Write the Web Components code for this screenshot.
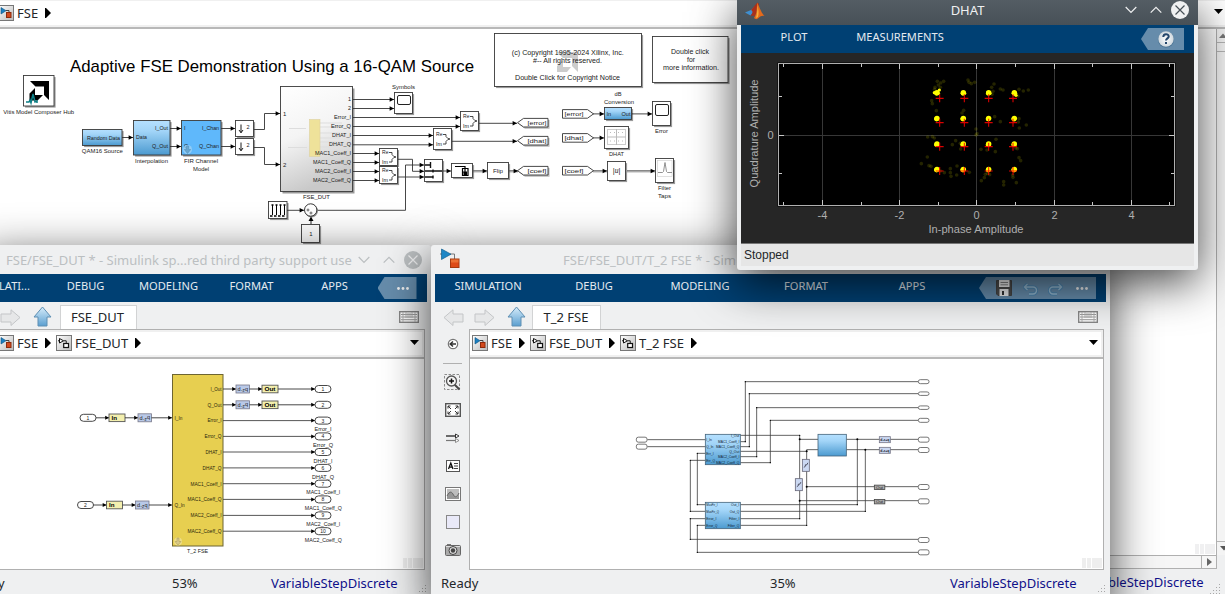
<!DOCTYPE html>
<html lang="en">
<head>
<meta charset="utf-8">
<title>Simulink desktop</title>
<style>
html,body{margin:0;height:100%;overflow:hidden;background:#eff0f1}
body{font-family:"Noto Sans",sans-serif;font-size:12.5px;color:#232629}
</style>
</head>
<body>
<desk-top></desk-top>
<script>
/* ---------- shared helpers ---------- */
function define(name, render) {
  customElements.define(name, class extends HTMLElement {
    connectedCallback() {
      if (this.shadowRoot) return;
      this.attachShadow({mode: 'open'}).innerHTML = render(this);
    }
  });
}

/* Diagram primitives, all in desktop coordinates. */
const F = 'font-family="Liberation Sans, Arial, sans-serif"';
const text = (x, y, s, size, anchor = 'start', len = 0, fill = '#222', extra = '') =>
  `<text x="${x}" y="${y}" font-size="${size}" text-anchor="${anchor}" fill="${fill}" ${len ? `textLength="${len}" lengthAdjust="spacingAndGlyphs"` : ''} ${extra}>${s}</text>`;
const block = (x, y, x2, y2, fill = '#fff', shadow = 1.6) =>
  (shadow ? `<rect x="${x + shadow}" y="${y + shadow}" width="${x2 - x}" height="${y2 - y}" fill="#000" opacity=".4"/>` : '') +
  `<rect x="${x}" y="${y}" width="${x2 - x}" height="${y2 - y}" fill="${fill}" stroke="#3a3a3a" stroke-width=".9"/>`;
const arrowHead = (x, y, s = 2.3) => `<path d="M${x} ${y}l${-s * 1.9} ${-s}v${2 * s}z" fill="#000"/>`;
const wire = (pts, head = true, c = '#333', w = .9, s = 2.3) => {
  const last = pts[pts.length - 1];
  return `<polyline points="${pts.map(p => p.join()).join(' ')}" fill="none" stroke="${c}" stroke-width="${w}"/>` + (head ? arrowHead(last[0], last[1], s) : '');
};
const oval = (x, y, w = 16, h = 7) => `<rect x="${x}" y="${y - h / 2}" width="${w}" height="${h}" rx="${h / 2}" fill="#fff" stroke="#333" stroke-width=".9"/>`;
const blueGrad = `<linearGradient id="bl" x1="0" y1="0" x2="0" y2="1"><stop offset="0" stop-color="#b5e0ff"/><stop offset=".3" stop-color="#a3d5f8"/><stop offset="1" stop-color="#4b9ad0"/></linearGradient>`;

/* ---------- icons ---------- */
const ICONS = {
  model: `<svg width="16" height="16"><defs><linearGradient id="g" x1="0" y1="0" x2="1" y2="1"><stop offset="0" stop-color="#fff"/><stop offset="1" stop-color="#bbb"/></linearGradient></defs><rect x=".5" y=".5" width="15" height="15" fill="url(#g)" stroke="#777"/><path d="M3 2.500v6.500L8 5.700z" fill="#1b7fc0" stroke="#0c517f" stroke-width=".6"/><path d="M8 5.500h3v2" fill="none" stroke="#444"/><rect x="8.500" y="7.500" width="4.500" height="5" fill="#d4491c" stroke="#8e2a0b"/></svg>`,
  subsys: `<svg width="16" height="16"><defs><linearGradient id="g" x1="0" y1="0" x2="1" y2="1"><stop offset="0" stop-color="#fff"/><stop offset="1" stop-color="#bbb"/></linearGradient></defs><rect x=".5" y=".5" width="15" height="15" fill="url(#g)" stroke="#777"/><path d="M3.500 3.500v4.500L7.500 5.800zM7.500 5.800h2.700v2.500M2 5.800h1.500" fill="#fff" stroke="#111"/><rect x="7.700" y="8.500" width="4.800" height="4" fill="#fff" stroke="#111" stroke-width="1.200"/></svg>`,
  app: `<svg width="22" height="22"><path d="M1 6h3M11 6h4.500v6" fill="none" stroke="#777"/><path d="M2.500 1v10.500L12 6.200z" fill="#1d86c6" stroke="#11608f" stroke-width=".7"/><rect x="11.500" y="11" width="8.500" height="8.500" fill="#dd4b18" stroke="#a53a10"/><path d="M12 11.500h7.500v3H12z" fill="#f08040" opacity=".7"/></svg>`,
  left: `<svg width="21" height="17"><path d="M1 8.500 10 .8V5h10v8H10v3.500z" fill="#e6e7e8" stroke="#c3c5c7"/></svg>`,
  right: `<svg width="21" height="17"><path d="M20 8.500 11 .8V5H1v8h10v3.500z" fill="#e6e7e8" stroke="#c3c5c7"/></svg>`,
  up: `<svg width="19" height="21"><defs><linearGradient id="u" x1="0" y1="0" x2="0" y2="1"><stop offset="0" stop-color="#d6ecfa"/><stop offset="1" stop-color="#5b9fd0"/></linearGradient></defs><path d="M9.500 1 18 11h-4v9H5v-9H1z" fill="url(#u)" stroke="#5e8fb3"/></svg>`,
  keyboard: `<svg width="20" height="12"><rect x=".7" y=".7" width="18.600" height="10.600" fill="#fff" stroke="#858585" stroke-width="1.400"/><path d="M2 3.500h16M2 6h16M2 8.700h16" stroke="#999"/><path d="M4 1v10M7 1v6M9 2v5M11 2v5M13 1v6M16 1v10" stroke="#aaa" stroke-width=".9"/></svg>`,
  caret: `<svg width="9" height="5"><path d="M0 0h9L4.500 5z" fill="#000"/></svg>`,
  tri: `<svg width="6" height="10"><path d="M0 0h1l5 5-5 5H0z" fill="#000"/></svg>`,
  back: `<svg width="12" height="12"><circle cx="6" cy="6" r="4.700" fill="#fff" stroke="#777" stroke-width="1.200"/><path d="M9 6H3.500M6 3.500 3.200 6 6 8.500" fill="none" stroke="#333" stroke-width="1.500"/></svg>`,
  zoom: `<svg width="17" height="17"><rect x=".5" y=".5" width="15" height="15" fill="none" stroke="#8b8b8b" stroke-dasharray="2.500 1.500"/><path d="m10.500 10.500 5 5" stroke="#444" stroke-width="2"/><circle cx="7.500" cy="7" r="5" fill="#f5f5f5" stroke="#555" stroke-width="1.300"/><path d="M7.500 4.500v5M5 7h5" stroke="#111" stroke-width="1.500"/></svg>`,
  fit: `<svg width="16" height="14"><rect x=".7" y=".7" width="14.600" height="12.600" fill="#fff" stroke="#555" stroke-width="1.400"/><path d="M3 5.500V3h2.500M3 3l3 3M13 5.500V3h-2.500M13 3l-3 3M3 8.500V11h2.500M3 11l3-3M13 8.500V11h-2.500M13 11l-3-3" fill="none" stroke="#333" stroke-width="1"/></svg>`,
  arrows: `<svg width="15" height="10"><path d="M1 3h11" stroke="#111" stroke-width="1.200"/><path d="M1 7.500h11" stroke="#777" stroke-width="1.200"/><path d="M10.500 1v4l3.500-2z" fill="#fff" stroke="#111" stroke-width=".8"/><path d="M10.500 5.500v4l3.500-2z" fill="#fff" stroke="#777" stroke-width=".8"/></svg>`,
  note: `<svg width="14" height="12"><rect x=".5" y=".5" width="13" height="11" fill="#fff" stroke="#555"/><path d="M2.500 9 4.800 3 7 9M3.300 7.200h3" fill="none" stroke="#111" stroke-width="1.300"/><path d="M8 3.500h4M8 6h4M8 8.500h4" stroke="#444"/></svg>`,
  image: `<svg width="16" height="14"><rect x=".5" y=".5" width="15" height="13" fill="#fff" stroke="#777"/><rect x="2" y="2" width="12" height="10" fill="#bdbdbd"/><path d="M2 9c3-6 5-4 6.500-1S12 10 14 6v6H2z" fill="#969696"/><path d="M2 9c3-6 5-4 6.500-1S12 10 14 6" fill="none" stroke="#666"/></svg>`,
  area: `<svg width="14" height="14"><rect x=".5" y=".5" width="13" height="13" fill="#e9e9f8" stroke="#888"/></svg>`,
  camera: `<svg width="16" height="12"><rect x="2" y="0" width="4" height="2" fill="#777"/><rect x=".5" y="1.500" width="15" height="10" rx="1" fill="#aaa" stroke="#666"/><path d="M1 2.500h14" stroke="#ddd"/><circle cx="8" cy="6.500" r="4" fill="#ddd" stroke="#444"/><circle cx="8" cy="6.500" r="2.200" fill="#444"/></svg>`,
  save: `<svg width="16" height="16"><path d="M.5.5h15v15H2l-1.500-1.500z" fill="#4c4c4c" stroke="#444"/><rect x="3" y="0" width="10.500" height="7" fill="#efefef"/><path d="M4.500 2.500h7.500M4.500 4.800h7.500" stroke="#888"/><rect x="3.500" y="9" width="9" height="7" fill="#eee"/><rect x="6" y="11" width="2" height="4" fill="#333"/></svg>`,
  undo: `<svg width="15" height="13"><path d="M4.500 1 1.500 4l3 3M2 4h8a3.200 3.200 0 0 1 0 7H6" fill="none" stroke="#4e86b0" stroke-width="3.400"/><path d="M4.500 1 1.500 4l3 3M2 4h8a3.200 3.200 0 0 1 0 7H6" fill="none" stroke="#94b8d0" stroke-width="1.400"/></svg>`,
  redo: `<svg width="15" height="13"><path d="m10.500 1 3 3-3 3M13 4H5a3.200 3.200 0 0 0 0 7h4" fill="none" stroke="#4e86b0" stroke-width="3.400"/><path d="m10.500 1 3 3-3 3M13 4H5a3.200 3.200 0 0 0 0 7h4" fill="none" stroke="#94b8d0" stroke-width="1.400"/></svg>`,
  dots: `<svg width="12" height="3"><circle cx="1.500" cy="1.500" r="1.400" fill="#eee"/><circle cx="6" cy="1.500" r="1.400" fill="#eee"/><circle cx="10.500" cy="1.500" r="1.400" fill="#eee"/></svg>`,
  min: `<svg width="12" height="8"><path d="m.7 1 5.300 5.300L11.300 1" fill="none" stroke="currentColor" stroke-width="1.200"/></svg>`,
  max: `<svg width="12" height="8"><path d="M.7 6.700 6 1.400l5.300 5.300" fill="none" stroke="currentColor" stroke-width="1.200"/></svg>`,
  close: `<svg width="18" height="18"><circle cx="9" cy="9" r="9" fill="currentColor"/><path d="m4.500 4.500 9 9M13.500 4.500l-9 9" stroke="var(--x)" stroke-width="1.200"/></svg>`,
  matlab: `<svg width="20" height="18"><path d="M0 10.500 6 8l4-4c-1 4-2 8-4.500 9.500z" fill="#3f8fd0"/><path d="M6 8 12 1c1-.8 1.600.2 2 1.500L10 14l-4.500-.5c2-2 3-4 .5-5.500z" fill="#a9301c"/><path d="M12 .8C14 3 16 11 19.500 14c-2-.8-4 0-6 2-1.500 1.500-3 1.500-4.500 0C12 12 12 5 12 .8z" fill="#e56a1b"/><path d="M12.500 3c1 5 1.500 8 .5 12l-2 1c1-4 1.500-8 1.500-13z" fill="#f7b03c"/></svg>`,
  help: `<svg width="18" height="18"><defs><radialGradient id="h"><stop offset="0" stop-color="#fff"/><stop offset="1" stop-color="#cfd8de"/></radialGradient></defs><circle cx="9" cy="9.500" r="8" fill="#3f6a8c"/><circle cx="9" cy="9" r="7.700" fill="url(#h)"/><path d="M6.300 7c0-3.800 5.400-3.600 5.400-.6 0 2-2.700 2-2.700 4.200M9 12v2" fill="none" stroke="#24466b" stroke-width="2"/></svg>`,
  grip: `<svg width="11" height="11" fill="#a8a8a8"><path d="M9 1h1v1H9zM6 4h1v1H6zM9 4h1v1H9zM3 7h1v1H3zM6 7h1v1H6zM9 7h1v1H9zM0 10h1v1H0zM3 10h1v1H3zM6 10h1v1H6zM9 10h1v1H9z"/></svg>`
};
define('ui-icon', el => `<style>:host{display:inline-flex;flex:none}svg{display:block}</style>${ICONS[el.getAttribute('name')]}`);

/* ---------- window chrome ---------- */
define('app-window', () => `<style>
:host{position:absolute;display:flex;flex-direction:column;box-sizing:border-box;background:#eff0f1;border-radius:3px 3px 0 0;box-shadow:0 12px 46px rgba(0,0,0,.74)}
</style><slot></slot>`);

define('title-bar', el => `<style>
:host{display:flex;align-items:center;height:29px;flex:none;color:#bbbfc1;--x:#eff0f1;position:relative;font-size:13px}
:host([dark]){height:25px;background:linear-gradient(#545d64,#475057);color:#eff0f1;--x:#475057;font-size:13px}
.t{flex:1;white-space:nowrap;text-align:center}
.b{display:flex;align-items:center;gap:12px}
</style><slot name="icon"></slot><span class="t"><slot></slot></span><slot name="buttons"></slot>`);

define('win-buttons', () => `<style>:host{display:flex;align-items:center;gap:12.500px;flex:none}</style>
<ui-icon name="min"></ui-icon><ui-icon name="max"></ui-icon><ui-icon name="close" style="margin-left:-3px"></ui-icon>`);

define('ribbon-bar', el => `<style>
:host{display:flex;align-items:center;height:28px;flex:none;background:#004073;color:#e4eaf0;font-size:11.1px;margin:0 4px}
.tabs{display:flex;flex:1;height:100%}
.tools{display:flex;align-items:center;height:22px;margin:0 10px 0 0;background:#668cab;clip-path:polygon(0 50%,7px 0,100% 0,100% 100%,7px 100%)}
</style><div class="tabs"><slot></slot></div><div class="tools"><slot name="tools"></slot></div>`);

define('ribbon-tab', () => `<style>:host{display:block;width:var(--tab,106px);flex:none;text-align:center;line-height:24.500px;white-space:nowrap}</style><slot></slot>`);

define('nav-strip', () => `<style>:host{display:flex;align-items:center;height:27px;flex:none}</style><slot></slot>`);
define('doc-tab', () => `<style>:host{display:block;align-self:flex-end;height:24px;line-height:23px;box-sizing:border-box;background:#fff;border:1px solid #d2d3d4;border-bottom:0;text-align:center;font-size:13px;box-shadow:0 1px #fff;text-indent:-1px}</style><slot></slot>`);

define('crumb-bar', () => `<style>
:host{display:flex;flex:none;background:#f0f0f0;border-bottom:2px solid #b8b8b8;padding:2px 2px 2px 0;box-sizing:content-box;height:23px}
div{flex:1;display:flex;align-items:center;background:#fff;padding:0 3px 0 var(--in,2px)}
.s{flex:1}
</style><div><slot></slot><span class="s"></span><ui-icon name="caret" style="margin-top:-3px"></ui-icon></div>`);
define('crumb-item', el => `<style>:host{display:flex;align-items:center;font-size:13px;line-height:20px;white-space:nowrap;margin-top:-1px}span{margin:0 7px 0 3px;display:block;width:${el.getAttribute('w')}px}ui-icon:last-child{margin-right:5px}</style>
<ui-icon name="${el.getAttribute('icon')}"></ui-icon><span><slot></slot></span><ui-icon name="tri"></ui-icon>`);

define('side-palette', () => `<style>:host{display:flex;flex-direction:column;align-items:center;flex:none;box-sizing:border-box}
div{height:28px;display:flex;align-items:center}hr{width:19px;margin:5px 0 4px;border:0;border-top:1px solid #b0b0b0}</style>
<div style="margin-top:1px"><ui-icon name="back"></ui-icon></div><hr>
${['zoom', 'fit', 'arrows', 'note', 'image', 'area', 'camera'].map(n => `<div><ui-icon name="${n}"></ui-icon></div>`).join('')}`);

define('status-bar', () => `<style>
:host{display:grid;grid-template-columns:var(--cols);align-items:center;height:24px;padding-top:1px;flex:none;font-size:13px;line-height:24px;white-space:nowrap;position:relative}
::slotted([slot=solver]){color:#10108a}
ui-icon{position:absolute;right:4px;bottom:0}
</style><span><slot></slot></span><span><slot name="zoom"></slot></span><span><slot name="solver"></slot></span><ui-icon name="grip"></ui-icon>`);

/* ---------- diagrams ---------- */
const svg = (x, y, w, h, body) =>
  `<style>:host{display:block;flex:none;overflow:hidden;background:#fff}svg{display:block}</style><svg width="${w}" height="${h}" viewBox="${x} ${y} ${w} ${h}" ${F}>${body}</svg>`;

define('top-diagram', () => {
  let s = `<defs>${blueGrad}<linearGradient id="gr" x1="0" y1="0" x2=".3" y2="1"><stop offset="0" stop-color="#fff"/><stop offset=".5" stop-color="#f4f4f4"/><stop offset="1" stop-color="#c9c9c9"/></linearGradient></defs>`;
  s += text(70, 72, 'Adaptive FSE Demonstration Using a 16-QAM Source', 17, 'start', 404, '#000');
  // hub
  s += block(23.500, 75.500, 54, 106);
  s += `<path d="M30 81h19v19l-5-5v-8.500h-8.500z"/><path d="M35 88 29.500 93.500v7h8l5.500-5.500h-8z"/><path d="M26 102h3l1-2 1 3 2-9 2 8 2-1v2" stroke="#0c7f86" stroke-width="1.500" fill="none"/>`;
  s += text(38.700, 114, 'Vitis Model Composer Hub', 6, 'middle', 71);
  // source chain
  s += block(82.500, 129.500, 122, 145.500, 'url(#bl)') + text(103.500, 140, 'Random Data', 5.300, 'middle', 33) + text(102.300, 153, 'QAM16 Source', 6, 'middle', 41);
  s += block(133.500, 120.500, 170, 155, 'url(#bl)') + text(136, 139, 'Data', 5.500, 'start', 11) + text(168, 130, 'I_Out', 5.500, 'end', 13) + text(168, 148, 'Q_Out', 5.500, 'end', 16) + text(151.500, 163, 'Interpolation', 6, 'middle', 33);
  s += block(181.500, 120.500, 221, 155, '#5fb8fb') + text(184, 130, 'I', 5.500) + text(184, 148, 'Q', 5.500) + text(219, 130, 'I_Chan', 5.500, 'end', 17) + text(219, 148, 'Q_Chan', 5.500, 'end', 20) + text(201, 163, 'FIR Channel', 6, 'middle', 34) + text(201, 171, 'Model', 6, 'middle', 16);
  s += `<circle cx="187.500" cy="149.500" r="4.500" fill="#a6d5f7" opacity=".7"/><path d="M186.300 146h2.400v3.500h2l-3.200 4-3.200-4h2z" fill="#68a6cf" stroke="#4d8ab5" stroke-width=".5"/>`;
  for (const y of [120.500, 138.500]) s += block(235.500, y, 253.500, y + 16) + `<path d="M241 ${y + 4}v8m-2-2.500 2 2.800 2-2.800" fill="none" stroke="#000" stroke-width=".9"/>` + text(246.500, y + 8, '2', 5.500);
  s += wire([[122, 137.500], [133, 137.500]]) + wire([[170, 128.500], [181, 128.500]]) + wire([[170, 146.500], [181, 146.500]]) + wire([[221, 128.500], [235, 128.500]]) + wire([[221, 146.500], [235, 146.500]]);
  s += wire([[254, 129.500], [264.500, 129.500], [264.500, 113.500], [280, 113.500]]) + wire([[254, 147.500], [264.500, 147.500], [264.500, 164.500], [280, 164.500]]);
  // DUT
  s += block(280.500, 86.500, 352.500, 191.500, 'url(#gr)', 2);
  s += `<path d="M289 128.500h17M288 147.500h19M320 123h22M320 127h18M320 133h20M320 138h20M320 142h20M320 147h20" stroke="#ddd" fill="none"/><rect x="309.500" y="119.500" width="10.500" height="37" fill="#efe29a" stroke="#ddd0a0" stroke-width=".6"/>`;
  s += text(283, 116, '1', 6) + text(283, 167, '2', 6);
  const ports = [['1', 99, 3], ['2', 108, 3], ['Error_I', 117, 17], ['Error_Q', 126, 20], ['DHAT_I', 135, 19], ['DHAT_Q', 144.300, 22], ['MAC1_Coeff_I', 153, 36], ['MAC1_Coeff_Q', 162, 38], ['MAC2_Coeff_I', 171, 36], ['MAC2_Coeff_Q', 180, 38]];
  for (const [n, y, l] of ports) s += text(351, y + 2, n, 5.700, 'end', l);
  s += text(316.500, 199, 'FSE_DUT', 6, 'middle', 27);
  const ends = [394, 394, 460, 460, 433, 433, 379, 379, 379, 379];
  ports.forEach((p, i) => s += wire([[353, p[1] + .500], [ends[i], p[1] + .500]]));
  s += block(394.500, 92.500, 412.500, 113.500) + `<rect x="397.500" y="95.500" width="13" height="9" rx="1.500" fill="#fff" stroke="#222"/>` + text(403.500, 89, 'Symbols', 6, 'middle', 23);
  for (const [x, y, y2] of [[460.500, 111.500, 130.500], [433.500, 128.500, 149.500], [379.500, 148.500, 165.500], [379.500, 166.500, 183.500]]) {
    const m = (y + y2) / 2;
    s += block(x, y, x + 18, y2) + text(x + 2.500, m - 2.600, 'Re', 5.300, 'start', 6.500) + text(x + 2.500, m + 6.500, 'Im', 5.300, 'start', 6) + `<path d="M${x + 9.500} ${m - 4.500}h3v2q1.500 2.500 4 2.500M${x + 9.500} ${m + 5}h3v-2.500q1.500-2.500 4-2.500" fill="none" stroke="#333" stroke-width=".9"/>`;
  }
  s += block(424.500, 159.500, 442.500, 181.500) + `<path d="M425 165h5.500M425 171h17M425 177h7.500M430.500 162v6M433 169.500v3M433 175.500v3" stroke="#111" stroke-width="1.400" fill="none"/>`;
  s += block(451.500, 163.500, 472.500, 177.500) + `<path d="M455 166.500h10v7" fill="none" stroke="#000" stroke-width="1.200"/><path d="M462.500 168.500h5.500v7h-5.500zM462 172h5" fill="none" stroke="#000" stroke-width="1.200"/><path d="M463.500 172h3.500v3h-3.500z"/>`;
  s += block(487.500, 162.500, 508.500, 178.500) + text(498, 173, 'Flip', 6, 'middle', 10);
  s += wire([[398, 159.300], [412.500, 159.300], [412.500, 171.300], [424, 171.300]]) + wire([[398, 177], [424, 177]]) + wire([[317, 210.300], [405.500, 210.300], [405.500, 165], [424, 165]]) + wire([[443, 171], [451, 171]]);
  const bus = (a, b, y = 171) => `<path d="M${a} ${y - .500}H${b}M${a} ${y + .800}H${b}" stroke="#555" stroke-width=".7"/>` + arrowHead(b, y);
  s += bus(473, 487) + bus(509, 518) + bus(593, 607) + bus(627, 655);
  s += wire([[479, 123.300], [517, 123.300]]) + wire([[452, 141.300], [517, 141.300]]);
  // tags
  for (const [n, y] of [['[error]', 122.700], ['[dhat]', 140.700], ['[coef]', 170.700]]) s += `<path d="M519 ${y + 1.500}l6-4.300h24.500v8.800H525z" fill="#888" opacity=".6"/><path d="M517.500 ${y}l6-4.300H548v8.600h-24.500z" fill="#fff" stroke="#333" stroke-width=".9"/>` + text(537, y + 2.200, n, 6, 'middle', 19);
  for (const [n, y] of [['[error]', 113.900], ['[dhat]', 137.900], ['[coef]', 170.700]]) s += `<path d="M593.500 ${y}l-6-4.300h-25v8.600h25z" fill="#fff" stroke="#333" stroke-width=".9"/>` + text(574, y + 2.200, n, 6, 'middle', 19);
  s += wire([[593, 113.900], [604, 113.900]]) + wire([[593, 137.900], [604, 137.900]]) + wire([[632, 113.900], [652, 113.900]]);
  // sinks
  s += block(604.500, 107.500, 631.500, 119.500, 'url(#bl)') + text(606.500, 116, 'In', 5.500) + text(630.500, 116, 'Out', 5.500, 'end', 9) + text(618, 96, 'dB', 6, 'middle', 7) + text(619, 104, 'Conversion', 6, 'middle', 30);
  s += block(652.500, 101.500, 670.500, 125.500) + `<rect x="655.500" y="104.500" width="13" height="11" rx="1.500" fill="#fff" stroke="#222"/>` + text(661.500, 133, 'Error', 6, 'middle', 13);
  s += block(604.500, 126.500, 628.500, 148.500) + `<rect x="607.500" y="129.500" width="18" height="15" fill="#fff" stroke="#ccc"/><path d="M616.500 129v16M607 137h19" stroke="#bbb"/><path d="M610 132.500h13M610 141h13" stroke="#bbb" stroke-dasharray="1 3"/>` + text(616.500, 156, 'DHAT', 6, 'middle', 15);
  s += block(607.500, 161.500, 625.500, 180.500) + text(616.500, 173, '|<tspan font-style="italic" font-family="Liberation Serif">u</tspan>|', 7.500, 'middle');
  s += block(655.500, 158.500, 673.500, 182.500) + `<rect x="657.500" y="160.500" width="14.500" height="16" fill="#fff" stroke="#ccc" stroke-width=".6"/><path d="M658 172.500h4.500l1-1 1.500-9 1.500 9 1 1h4.500" fill="none" stroke="#777" stroke-width=".8"/>` + text(664.500, 190, 'Filter', 6, 'middle', 13) + text(664.500, 198, 'Taps', 6, 'middle', 13);
  // constants and sum
  s += block(268.500, 201.500, 287, 218.500) + `<path d="M272.500 215v-10M276.500 215v-10M280.500 215v-10M284.500 215v-10" stroke="#000" stroke-width="1"/><path d="M270 216h2.500M274 216h2.500M278 216h2.500M282 216h2.500M271.500 205h2M275.500 205h2M279.500 205h2M283.500 205h2" stroke="#000" stroke-width="1.500"/>` + wire([[287, 210.300], [304, 210.300]]);
  s += `<circle cx="311.500" cy="211" r="6.500" fill="#999"/><circle cx="310.700" cy="210" r="6.200" fill="#fff" stroke="#222" stroke-width=".9"/><path d="M306.500 210h3M308 208.500v3M309.500 213h3M311 211.500v3" stroke="#333" stroke-width=".7"/>`;
  s += block(301.500, 224.500, 319.500, 242.500) + text(311, 236, '1', 6, 'middle') + `<path d="M311 224v-5" stroke="#222"/><path d="M311 216.500l-2.500 4.500h5z"/>`;
  // notes
  s += block(494.500, 33.500, 641.500, 86.500) + `<path d="M557 52h21v20l-6-6v-8h-9zM563 60l-6 6v6h10l4-5h-8z" fill="#ccc"/>`;
  s += text(567.800, 55, '(c) Copyright 1995-2024 Xilinx, Inc.', 7, 'middle', 112) + text(567.500, 63, '#-- All rights reserved.', 7, 'middle', 69) + text(567.500, 80, 'Double Click for Copyright Notice', 7, 'middle', 105);
  s += block(652.500, 36.500, 728, 82.500) + text(690, 54, 'Double click', 7, 'middle', 38) + text(691, 62, 'for', 7, 'middle', 8) + text(691, 70, 'more information.', 7, 'middle', 56);
  // overview stub
  s += `<path d="M1195 544h4v10h-4zM1200 544h4v10h-4zM1205 544h10v10h-10z" fill="#f0f0f1"/>`;
  return svg(0, 29, 1216, 526, s);
});

const delay = (x, y) => `<rect x="${x}" y="${y - 4}" width="13.500" height="8" fill="#b9c9e8" stroke="#778" stroke-width=".8"/>` + text(x + 1.500, y + 2.300, 'd', 5.500) + text(x + 5, y + 2.700, '-z', 4.500) + text(x + 9, y + 1.500, 'q', 5.500);
const tagBox = (x, y, n, e) => `<rect x="${x}" y="${y - 3.800}" width="16" height="7.600" fill="#f3efae" stroke="#555" stroke-width=".9"/>` + text(x + 2.500, y + 2.100, n, 6, 'start', e, '#000', 'font-weight="bold"');

define('dut-diagram', () => {
  let s = `<rect x="172.500" y="374.500" width="50.500" height="171.500" fill="#e7cf50" stroke="#6d6532"/>`;
  const rows = [['I_Out', 389, 11], ['Q_Out', 404.800, 14], ['Error_I', 420.600, 14], ['Error_Q', 436.400, 17], ['DHAT_I', 452, 16], ['DHAT_Q', 467.900, 19], ['MAC1_Coeff_I', 483.700, 31], ['MAC1_Coeff_Q', 499.400, 34], ['MAC2_Coeff_I', 515.400, 31], ['MAC2_Coeff_Q', 531.200, 34]];
  rows.forEach(([n, y, l], i) => {
    s += text(221.500, y + 1.800, n, 4.700, 'end', l, '#2a260c');
    if (i < 2) s += wire([[223, y], [236, y]], true, '#333', .900, 2) + delay(236, y) + wire([[249.500, y], [262, y]], true, '#333', .900, 2) + tagBox(262, y, 'Out', 11) + wire([[278, y], [315, y]], true, '#333', .900, 2);
    else { s += wire([[223, y], [315, y]], true, '#444', .900, 2); s += text(i < 6 ? 323 : 323.300, y + 10.600, n, 5, 'middle', l + 3); }
    s += oval(315, y) + text(323, y + 1.900, i + 1, 5, 'middle');
  });
  for (const [x, y, k, n] of [[80, 417.800, 1, 'I_In'], [77.500, 505, 2, 'Q_In']]) {
    s += oval(x, y) + text(x + 8, y + 1.900, k, 5, 'middle') + wire([[x + 16, y], [x + 29, y]], true, '#333', .900, 2) + tagBox(x + 29, y, 'In', 5.500) + wire([[x + 45, y], [x + 58, y]], true, '#333', .900, 2) + delay(x + 58, y) + wire([[x + 71.500, y], [172, y]], true, '#333', .900, 2) + text(174.500, y + 2, n, 4.700, 'start', 0, '#2a260c');
  }
  s += `<circle cx="178" cy="541.500" r="4" fill="#f1e3a0" opacity=".7"/><path d="M177 538h2v3.500h2l-3 3.500-3-3.500h2z" fill="#d8c98a" stroke="#a79750" stroke-width=".5"/>` + text(197.500, 553, 'T_2 FSE', 5.500, 'middle', 21);
  s += `<path d="M403 558h4v10h-4zM408 558h4v10h-4zM413 558h10v10h-10z" fill="#eee"/>`;
  return svg(0, 359, 424, 210, s);
});

define('fse-diagram', () => {
  let s = `<defs>${blueGrad}</defs>`;
  const X = v => 620 + v / 3, Y = v => 370 + v / 3;
  const ln = (...a) => { const p = []; for (let i = 0; i < a.length; i += 2) p.push([X(a[i]), Y(a[i + 1])]); s += wire(p, false, '#3c3c3c', .800); };
  const dot = (x, y) => s += `<circle cx="${X(x)}" cy="${Y(y)}" r="1"/>`;
  ln(82, 209, 256, 209); ln(82, 230, 256, 230);
  ln(361, 215, 376, 215, 376, 35, 895, 35); ln(361, 230, 388, 230, 388, 71, 895, 71); ln(361, 260, 410, 260, 410, 113, 895, 113); ln(361, 278, 451, 278, 451, 151, 895, 151);
  ln(361, 196, 539, 196, 539, 446, 361, 446); ln(539, 208, 594, 208); ln(361, 244, 560, 244); ln(594, 239, 560, 239, 560, 466, 361, 466);
  ln(679, 208, 895, 208); ln(679, 239, 895, 239); ln(712, 208, 712, 404, 361, 404); ln(736, 239, 736, 424, 361, 424);
  ln(560, 350, 895, 350); ln(539, 392, 895, 392);
  ln(256, 250, 232, 250, 232, 404, 256, 404); ln(256, 271, 211, 271, 211, 424, 256, 424);
  ln(256, 446, 211, 446, 211, 508, 895, 508); ln(256, 466, 232, 466, 232, 547, 895, 547);
  [[539, 208], [560, 244], [712, 208], [736, 239], [560, 350], [539, 392]].forEach(d => dot(...d));
  [[376, 35], [388, 71], [410, 113], [451, 151], [232, 250], [211, 271], [211, 446], [232, 466], [539, 196], [232, 404], [211, 424], [539, 446], [560, 466], [211, 508], [232, 547], [376, 215], [388, 230], [410, 260], [451, 278], [712, 404], [736, 424]].forEach(([x, y]) => s += `<circle cx="${X(x)}" cy="${Y(y)}" r=".7"/>`);
  const bb = (x, y, x2, y2) => s += `<rect x="${X(x)}" y="${Y(y)}" width="${(x2 - x) / 3}" height="${(y2 - y) / 3}" fill="url(#bl)" stroke="#44637a" stroke-width=".8"/>`;
  bb(256, 193, 361, 284); bb(256, 397, 361, 476); bb(594, 193, 679, 258);
  const L = (x, y, n, a, l) => s += text(X(x), Y(y) + 1.500, n, 3.900, a, l / 3, '#12202c');
  L(259, 209, 'I_In', 'start', 16); L(259, 230, 'Q_In', 'start', 21); L(259, 250, 'Err_I', 'start', 22); L(259, 271, 'Err_Q', 'start', 26);
  L(358, 196, 'I_Out', 'end', 25); L(358, 215, 'MAC1_Coeff_I', 'end', 64); L(358, 230, 'MAC1_Coeff_Q', 'end', 70); L(358, 245, 'Q_Out', 'end', 30); L(358, 260, 'MAC2_Coeff_I', 'end', 64); L(358, 278, 'MAC2_Coeff_Q', 'end', 70);
  L(259, 404, 'MuxFir_I', 'start', 34); L(259, 425, 'MuxFir_Q', 'start', 38); L(259, 446, 'Error_I', 'start', 30); L(259, 467, 'Error_Q', 'start', 33);
  L(358, 404, 'Out_I', 'end', 25); L(358, 425, 'Out_Q', 'end', 29); L(358, 446, 'Filter_I', 'end', 31); L(358, 467, 'Filter_Q', 'end', 35);
  for (const [x, y] of [[547, 268], [526, 326]]) s += `<rect x="${X(x)}" y="${Y(y)}" width="7" height="12" fill="#cbd8f2" stroke="#667" stroke-width=".8"/><path d="M${X(x) + 1.500} ${Y(y) + 8}l1.500-1v-1.500h1.500l1-2" fill="none" stroke="#334" stroke-width=".8"/>`;
  for (const y of [209, 241]) s += `<rect x="${X(778)}" y="${Y(y) - 3}" width="11" height="6" fill="#cbd8f2" stroke="#778" stroke-width=".8"/>` + text(X(781), Y(y) + 1.500, 'd-z+q', 4, 'start', 9, '#112', 'font-weight="bold"');
  for (const y of [352, 395]) s += `<rect x="${X(763)}" y="${Y(y) - 2.200}" width="10.500" height="4.400" fill="#aaa" stroke="#444" stroke-width=".8"/>` + text(X(768), Y(y) + 1.400, 'Out', 4, 'start', 7, '#222');
  for (const [x, y, h] of [[49, 209, 5], [49, 230, 5], [895, 35, 4], [895, 71, 3.500], [895, 113, 3.500], [895, 151, 4], [895, 209, 5], [895, 240, 5], [895, 351, 5], [895, 394, 5], [895, 510, 5], [895, 547, 5]])
    s += `<rect x="${X(x)}" y="${Y(y) - h / 2}" width="10.700" height="${h}" rx="2" fill="#fff" stroke="#555" stroke-width=".8"/>`;
  s += `<path d="M1082 558h4v10h-4zM1087 558h4v10h-4zM1092 558h10v10h-10z" fill="#eee"/>`;
  return svg(470, 359, 633, 210, s);
});

/* ---------- constellation scope ---------- */
define('scatter-scope', () => {
  const X = v => 735 + v / 3, Y = v => v / 3;
  let s = `<rect x="777.500" y="62.500" width="398" height="144" fill="#000"/><path d="M822.500 64v142M899.500 64v142M976.500 64v142M1054.500 64v142M1131.500 64v142M779 135.500h396" stroke="#373737"/>`;
  s += `<rect x="778.500" y="63.500" width="396" height="142" fill="none" stroke="#b0b0b0"/>`;
  let t = '';
  for (const x of [822.500, 899.500, 976.500, 1054.500, 1131.500]) t += `M${x} 64v5M${x} 205v-5`;
  for (const x of [783.500, 861.500, 938.500, 1015.500, 1092.500, 1169.500]) t += `M${x} 64v3M${x} 205v-3`;
  t += 'M779 135.500h5M1174 135.500h-5M779 96.500h3M1174 96.500h-3M779 173.500h3M1174 173.500h-3';
  s += `<path d="${t}" stroke="#c8c8c8"/>`;
  const faint = [[607, 244], [617, 249], [626, 244], [600, 262], [610, 255], [590, 302], [592, 311], [604, 332], [699, 240], [702, 247], [709, 251], [719, 247], [777, 252], [770, 262], [796, 267], [804, 270], [774, 274], [771, 283], [852, 268], [865, 273], [880, 270], [849, 288], [686, 331], [681, 339], [779, 350], [796, 365], [852, 356], [850, 366], [853, 384], [874, 375], [723, 387], [726, 401], [723, 405], [578, 411], [592, 410], [598, 414], [652, 434], [662, 422], [677, 447], [783, 418], [738, 448], [756, 450], [781, 455], [847, 446], [842, 444], [577, 471], [559, 491], [582, 497], [588, 499], [617, 513], [628, 518], [646, 506], [666, 498], [646, 518], [648, 529], [665, 525], [852, 473], [857, 482], [764, 524], [751, 523], [748, 533], [739, 542], [806, 545], [806, 555], [844, 548], [833, 525], [834, 532], [703, 517], [757, 520], [599, 268], [616, 262], [838, 362], [676, 430]];
  s += `<g fill="#d8d800" fill-opacity=".17">${faint.map(([x, y]) => `<circle cx="${X(x)}" cy="${Y(y)}" r="1.800"/>`).join('')}</g><g fill="#ff0">`;
  for (const y of [278, 355, 432, 508]) for (const x of [605, 684, 760, 837])
    s += `<circle cx="${X(x + 1)}" cy="${Y(y)}" r="2.700"/><circle cx="${X(x)}" cy="${Y(y + 2)}" r="2.400"/><circle cx="${X(x + (y > 300 ? -3 : 5))}" cy="${Y(y + 2)}" r="1.700" opacity=".8"/>`;
  s += `<circle cx="${X(613)}" cy="${Y(270)}" r="1.600"/><circle cx="${X(598)}" cy="${Y(278)}" r="1.600"/><circle cx="${X(843)}" cy="${Y(286)}" r="1.700"/></g>`;
  let r = '';
  for (const y of [295, 368, 440, 513]) for (const x of [614, 688, 761, 834]) r += `M${X(x) - 4} ${Y(y)}h8M${X(x)} ${Y(y) - 4}v8`;
  s += `<path d="${r}" stroke="#f00" stroke-width="1.100" opacity=".85"/>`;
  for (const [x, n] of [[822.500, '-4'], [899.500, '-2'], [976.500, '0'], [1054.500, '2'], [1131.500, '4']]) s += text(x, 219, n, 11, 'middle', 0, '#afafaf');
  s += text(770.500, 139, '0', 11, 'middle', 0, '#afafaf') + text(976, 233, 'In-phase Amplitude', 11, 'middle', 95, '#afafaf');
  s += text(0, 0, 'Quadrature Amplitude', 11, 'middle', 108, '#afafaf', 'transform="translate(758 133.500) rotate(-90)"');
  return `<style>:host{display:block;background:#262626;margin:0 4px;border-bottom:1px solid #777}svg{display:block}</style><svg width="453" height="190" viewBox="741 53 453 190" ${F}>${s}</svg>`;
});

/* ---------- desktop ---------- */
define('desk-top', () => `<style>
:host{display:block;position:relative;width:1225px;height:594px;overflow:hidden}
.bg{display:flex;flex-direction:column;height:100%;background:#eff0f1}
.row{display:flex}
.vs{width:9px;border-left:1px solid #b0b0b0;box-sizing:border-box;background:#f4f4f4;height:526px;display:flex;flex-direction:column;justify-content:space-between;overflow:hidden}
.vs svg{display:block}
.hs{display:flex;height:14px;box-sizing:border-box;border-top:1px solid #b0b0b0;border-bottom:1px solid #b0b0b0;background:#f6f6f6;width:1217px}
.hs i{margin-left:auto;width:14px;border-left:1px solid #b0b0b0;border-right:1px solid #b0b0b0;display:flex;align-items:center;justify-content:center}
.top{--in:0px;box-sizing:border-box;height:29px;padding-top:1px;margin-left:-2px;width:1230px}
.w1{left:-20px;top:245px;width:450.500px;height:360px}
.w2{left:431px;top:245px;width:679px;height:360px}
.w3{left:737px;top:0;width:461px;height:270px;border-radius:0 0 3px 3px}
.ed1{width:424px;margin-left:20px;border:solid #b0b0b0;border-width:1px 1px 1px 0}
.ed2{border:1px solid #b0b0b0;width:633px}
.st3{height:22px;margin:0 4px;background:#e6e6e6;font:12px/22px "Liberation Sans",sans-serif;padding-left:3px}
</style>
<div class="bg">
  <crumb-bar class="top"><crumb-item icon="model" w="21">FSE</crumb-item></crumb-bar>
  <div class="row"><top-diagram></top-diagram><div class="vs"><svg width="9" height="24"><path d="M0 13.500h9M0 22.500h9" stroke="#b5b5b5"/><path d="M2 9h8L6 4.500z" fill="#777"/></svg><svg width="9" height="14"><path d="M0 .5h9" stroke="#b5b5b5"/><path d="M3 5h8L7 9.500z" fill="#555"/></svg></div></div>
  <div class="hs"><i><svg width="5" height="8"><path d="M0 0v8l5-4z" fill="#666"/></svg></i></div>
  <status-bar style="--cols:1108px 0 auto"><span slot="solver">bleStepDiscrete</span></status-bar>
</div>

<app-window class="w1">
  <title-bar><span style="display:block;text-align:left;margin-left:26px">FSE/FSE_DUT * - Simulink sp...red third party support use</span><win-buttons slot="buttons" style="margin-right:8.500px"></win-buttons></title-bar>
  <ribbon-bar style="--tab:83px;margin-left:0"><ribbon-tab style="width:64px;text-align:left;text-indent:19px">LATI...</ribbon-tab><ribbon-tab>DEBUG</ribbon-tab><ribbon-tab>MODELING</ribbon-tab><ribbon-tab>FORMAT</ribbon-tab><ribbon-tab>APPS</ribbon-tab><span slot="tools" style="display:flex;padding:0 8px 0 19px"><ui-icon name="dots"></ui-icon></span></ribbon-bar>
  <nav-strip><ui-icon name="right" style="margin:3px 0 0 20px"></ui-icon><ui-icon name="up" style="margin:2px 7.500px 0 12px"></ui-icon><doc-tab style="width:77px">FSE_DUT</doc-tab><ui-icon name="keyboard" style="margin:3px 12px 0 auto"></ui-icon></nav-strip>
  <div class="ed1"><crumb-bar style="--in:0px;margin-left:-2px;width:424px"><crumb-item icon="model" w="21">FSE</crumb-item><crumb-item icon="subsys" w="53">FSE_DUT</crumb-item></crumb-bar><dut-diagram></dut-diagram></div>
  <status-bar style="--cols:192px 99px auto;"><span style="margin-left:18px">y</span><span slot="zoom">53%</span><span slot="solver">VariableStepDiscrete</span></status-bar>
</app-window>

<app-window class="w2">
  <title-bar><ui-icon slot="icon" name="app" style="margin:-1px 0 0 7.500px"></ui-icon><span style="display:block;text-align:left;margin-left:102.500px">FSE/FSE_DUT/T_2 FSE * - Sim</span></title-bar>
  <ribbon-bar><ribbon-tab>SIMULATION</ribbon-tab><ribbon-tab>DEBUG</ribbon-tab><ribbon-tab>MODELING</ribbon-tab><ribbon-tab>FORMAT</ribbon-tab><ribbon-tab>APPS</ribbon-tab><span slot="tools" style="display:flex;align-items:center;gap:11px;padding:0 8px 0 17px"><ui-icon name="save"></ui-icon><ui-icon name="undo" style="margin-top:2px"></ui-icon><ui-icon name="redo" style="margin:2px 0 0 -1px"></ui-icon><ui-icon name="dots" style="margin-left:2px"></ui-icon></span></ribbon-bar>
  <nav-strip><ui-icon name="left" style="margin:3px 0 0 11.500px"></ui-icon><ui-icon name="right" style="margin:3px 0 0 10.500px"></ui-icon><ui-icon name="up" style="margin:2px 6.500px 0 11.500px"></ui-icon><doc-tab style="width:69px">T_2 FSE</doc-tab><ui-icon name="keyboard" style="margin:3px 12px 0 auto"></ui-icon></nav-strip>
  <div class="row"><side-palette style="margin-left:5.500px;width:32.500px"></side-palette><div class="ed2"><crumb-bar><crumb-item icon="model" w="21">FSE</crumb-item><crumb-item icon="subsys" w="53">FSE_DUT</crumb-item><crumb-item icon="subsys" w="45">T_2 FSE</crumb-item></crumb-bar><fse-diagram></fse-diagram></div></div>
  <status-bar style="--cols:339px 180px auto"><span style="margin-left:10px">Ready</span><span slot="zoom">35%</span><span slot="solver">VariableStepDiscrete</span></status-bar>
</app-window>

<app-window class="w3">
  <title-bar dark><ui-icon slot="icon" name="matlab" style="margin:-4px 0 0 8px"></ui-icon><span style="display:block;margin:-5px 0 0 45px">DHAT</span><win-buttons slot="buttons" style="margin:-5px 9px 0 0"></win-buttons></title-bar>
  <ribbon-bar><ribbon-tab>PLOT</ribbon-tab><ribbon-tab>MEASUREMENTS</ribbon-tab><span slot="tools" style="display:flex;padding:0 9px 0 16px"><ui-icon name="help"></ui-icon></span></ribbon-bar>
  <scatter-scope></scatter-scope>
  <div class="st3">Stopped</div>
</app-window>`);
</script>
</body>
</html>
